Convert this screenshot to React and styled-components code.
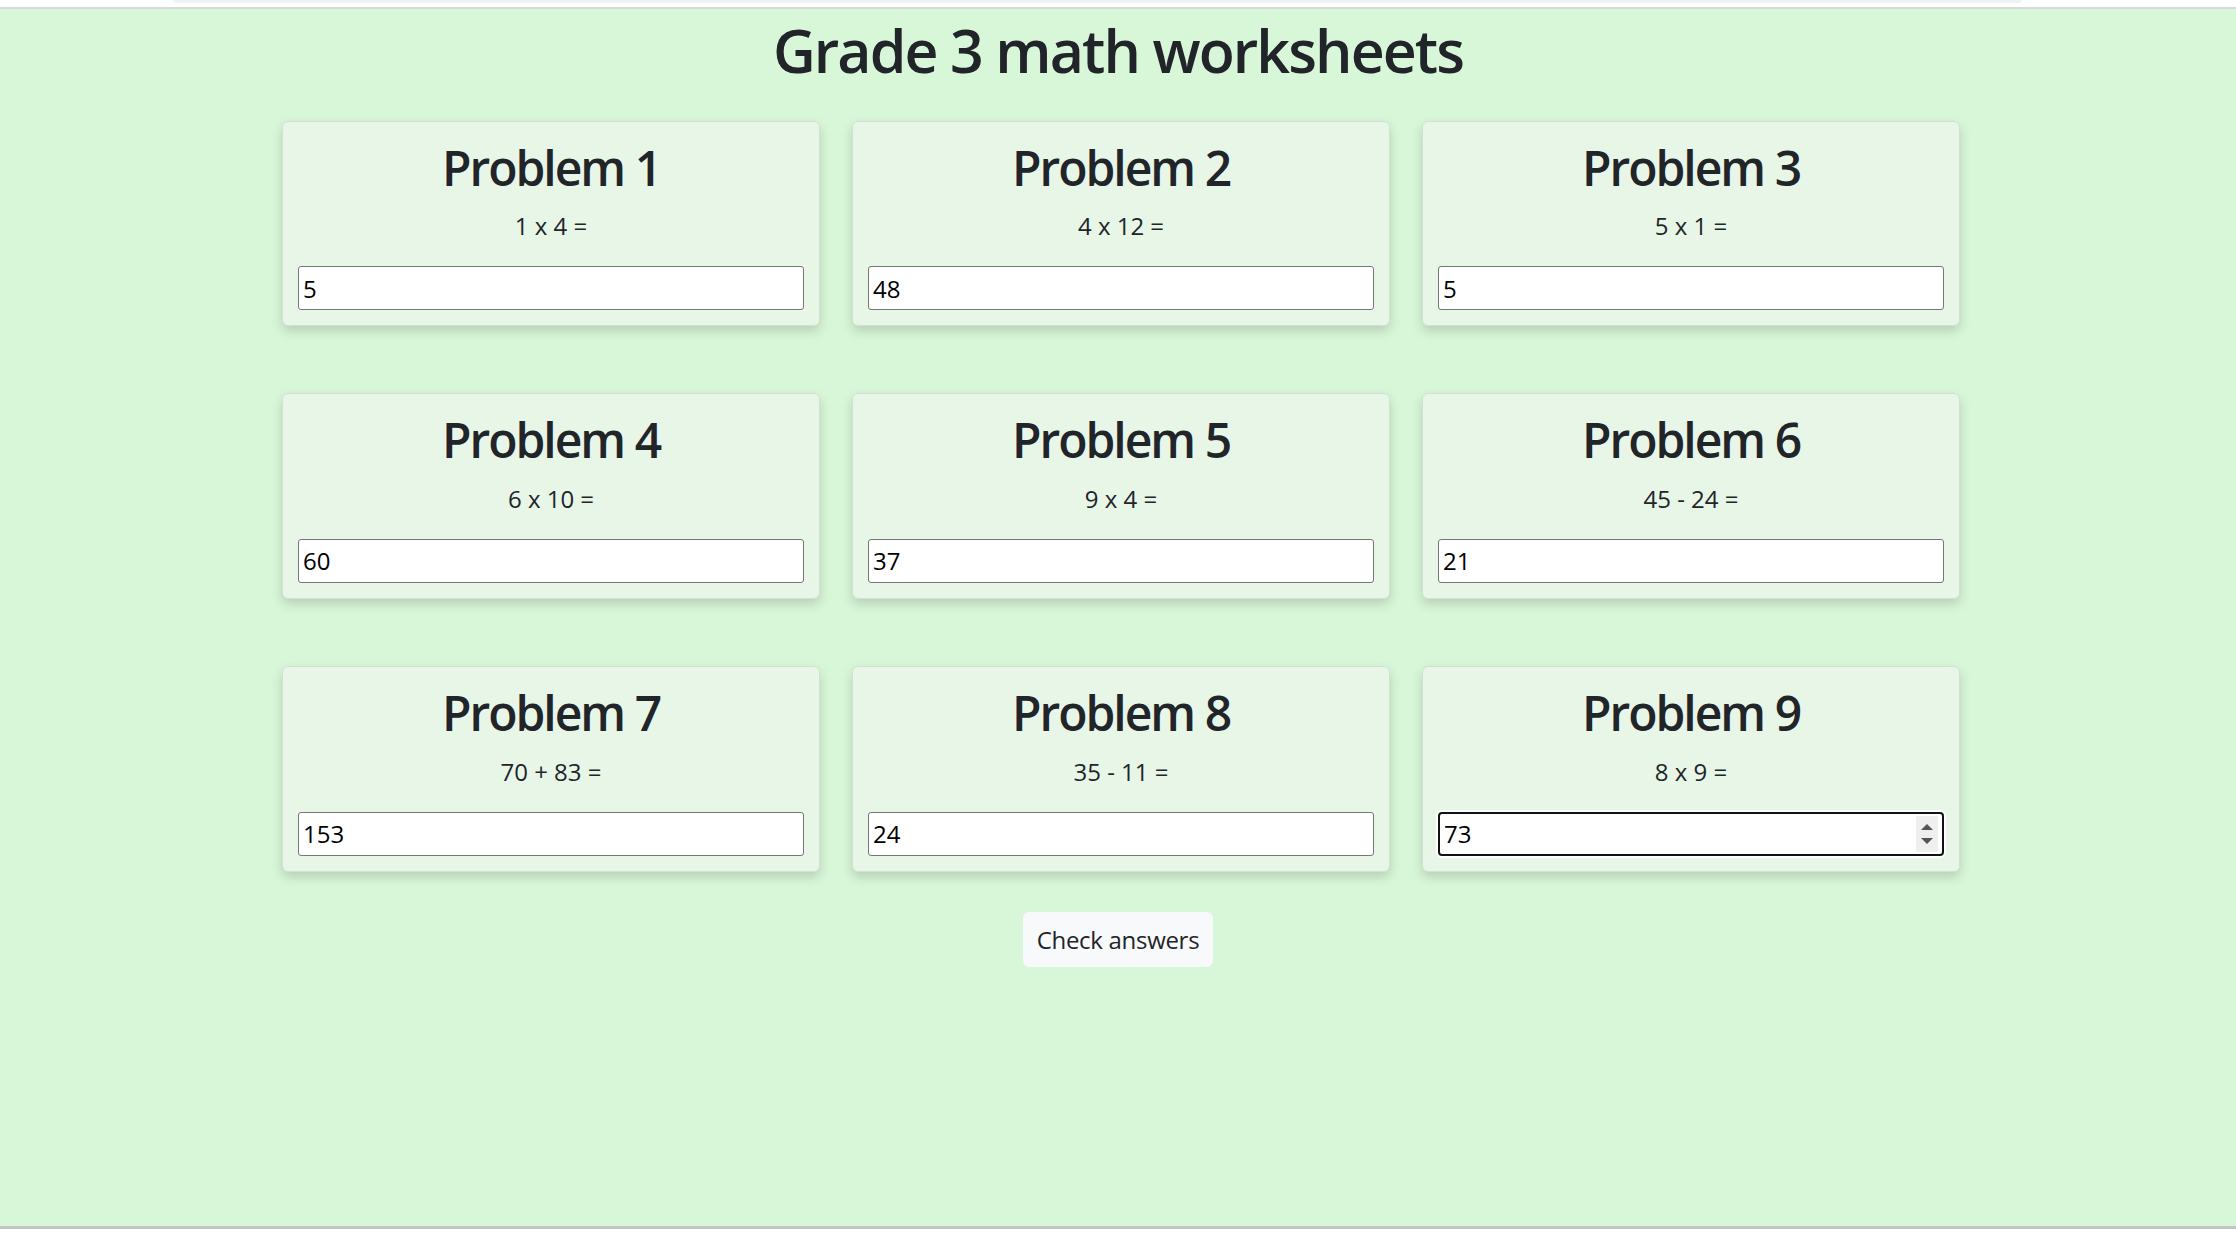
import React, { useState } from 'react';
import styled, { createGlobalStyle } from 'styled-components';

const GlobalStyle = createGlobalStyle`
    html, body {
        margin: 0;
        padding: 0;
        background: #ffffff;
    }
    body {
        font-family: "Open Sans", "Noto Sans", sans-serif;
        color: #212529;
    }
    * {
        box-sizing: border-box;
    }
`;

const TopStrip = styled.div`
    height: 9px;
    background: #ffffff;
    padding: 0 214px 0 173px;
    border-bottom: 2px solid #d8d9d8;
`;

const TopBar = styled.div`
    height: 3px;
    background: #f1f2f4;
    border-radius: 0 0 6px 6px;
`;

const Page = styled.div`
    background: #d8f7d8;
    height: 1220px;
    border-bottom: 3px solid #c2c6c2;
    display: flex;
    flex-direction: column;
    align-items: center;
`;

const Title = styled.h1`
    font-size: 59px;
    font-weight: 600;
    line-height: 1.2;
    margin: 0 0 35px;
    padding-top: 6px;
    text-align: center;
    letter-spacing: -1.9px;
`;

const Grid = styled.div`
    display: grid;
    grid-template-columns: repeat(3, 538px);
    column-gap: 32px;
    row-gap: 67px;
    margin-left: 6px;
`;

const Card = styled.div`
    background: #e8f6e8;
    border: 1px solid #d3e0d3;
    border-radius: 6px;
    box-shadow: 0 5px 12px rgba(0, 0, 0, 0.16);
    padding: 17px 15px 15px;
    text-align: center;
`;

const ProblemTitle = styled.h2`
    font-size: 48px;
    font-weight: 600;
    line-height: 1.2;
    margin: 0 0 12px;
    letter-spacing: -2px;
`;

const Expression = styled.p`
    font-size: 24px;
    line-height: 1.5;
    margin: 0 0 22px;
`;

const InputWrap = styled.div`
    position: relative;
`;

const Answer = styled.input`
    display: block;
    width: 100%;
    height: 44px;
    font-family: "Open Sans", "Noto Sans", sans-serif;
    font-size: 24px;
    color: #000;
    background: #ffffff;
    padding: 0 4px;
    border: ${p => (p.$focused ? '2px solid #111' : '1px solid #767676')};
    border-radius: ${p => (p.$focused ? '4px' : '3px')};
    box-shadow: ${p => (p.$focused ? '0 0 0 2px #ffffff' : 'none')};
    outline: none;
    -moz-appearance: textfield;
    &::-webkit-inner-spin-button,
    &::-webkit-outer-spin-button {
        -webkit-appearance: none;
        margin: 0;
    }
`;

const Spinner = styled.div`
    position: absolute;
    right: 6px;
    top: 4px;
    bottom: 4px;
    width: 22px;
    background: #efefef;
    display: flex;
    flex-direction: column;
    align-items: center;
    justify-content: space-around;
    padding: 4px 0;
`;

const Arrow = styled.span`
    width: 0;
    height: 0;
    border-left: 6px solid transparent;
    border-right: 6px solid transparent;
    ${p =>
        p.$up
            ? 'border-bottom: 6px solid #555;'
            : 'border-top: 6px solid #555;'}
`;

const CheckButton = styled.button`
    margin-top: 40px;
    height: 55px;
    padding: 0 13px;
    background: #f8f9fa;
    border: 1px solid #f8f9fa;
    border-radius: 6px;
    font-family: "Open Sans", "Noto Sans", sans-serif;
    font-size: 24px;
    letter-spacing: -0.3px;
    color: #212529;
    cursor: pointer;
`;

const problems = [
    { expr: '1 x 4 =', answer: '5' },
    { expr: '4 x 12 =', answer: '48' },
    { expr: '5 x 1 =', answer: '5' },
    { expr: '6 x 10 =', answer: '60' },
    { expr: '9 x 4 =', answer: '37' },
    { expr: '45 - 24 =', answer: '21' },
    { expr: '70 + 83 =', answer: '153' },
    { expr: '35 - 11 =', answer: '24' },
    { expr: '8 x 9 =', answer: '73' }
];

export default function App() {
    const [answers, setAnswers] = useState(problems.map(p => p.answer));

    const handleChange = (i, value) => {
        const next = [...answers];
        next[i] = value;
        setAnswers(next);
    };

    return (
        <>
            <GlobalStyle />
            <TopStrip>
                <TopBar />
            </TopStrip>
            <Page>
                <Title>Grade 3 math worksheets</Title>
                <Grid>
                    {problems.map((p, i) => {
                        const focused = i === problems.length - 1;
                        return (
                            <Card key={i}>
                                <ProblemTitle>Problem {i + 1}</ProblemTitle>
                                <Expression>{p.expr}</Expression>
                                <InputWrap>
                                    <Answer
                                        type="number"
                                        $focused={focused}
                                        value={answers[i]}
                                        onChange={e => handleChange(i, e.target.value)}
                                    />
                                    {focused && (
                                        <Spinner>
                                            <Arrow $up />
                                            <Arrow />
                                        </Spinner>
                                    )}
                                </InputWrap>
                            </Card>
                        );
                    })}
                </Grid>
                <CheckButton>Check answers</CheckButton>
            </Page>
        </>
    );
}
